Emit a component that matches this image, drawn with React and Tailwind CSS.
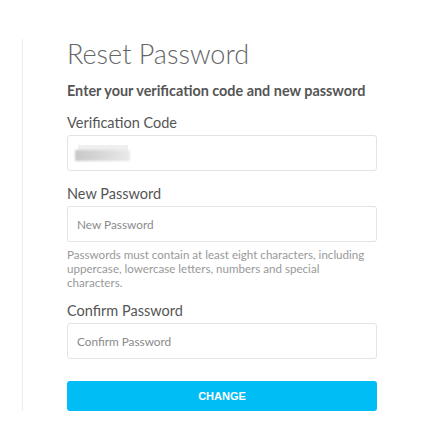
import React from "react";

const Label = ({ children, className = "" }) => (
  <label className={`block text-[14.5px] leading-[18px] text-[#555] ${className}`}>{children}</label>
);

const Field = ({ placeholder }) => (
  <input
    type="password"
    placeholder={placeholder}
    className="mt-[3px] block w-full h-[36px] px-[9px] rounded-[3px] border border-[#e3e3e3] bg-white text-[11.8px] text-[#555] placeholder:text-[#8a8a8a] outline-none"
    style={{ fontFamily: "Lato, 'Open Sans', sans-serif" }}
  />
);

export default function App() {
  return (
    <div className="w-[444px] h-[439px] bg-white" style={{ fontFamily: "Lato, 'Open Sans', sans-serif" }}>
      <div className="pt-[39px] pl-[22px]">
        <div className="w-[356px] border-l border-[#ececec] pl-[44px] pr-[1px]">
          <h1 className="text-[27px] leading-[30px] font-light text-[#666]">Reset Password</h1>
          <p className="mt-[14px] text-[14.4px] leading-[16px] font-bold text-[#555]">
            Enter your verification code and new password
          </p>

          <Label className="mt-[15px]">Verification Code</Label>
          <div className="mt-[3px] h-[36px] w-full rounded-[3px] border border-[#e3e3e3] bg-white flex items-center pl-[7px]">
            {/* blurred code */}
            <div className="relative w-[56px] h-[17px]">
              <div className="absolute left-[3px] top-0 w-[50px] h-[6px] bg-[#efefef]" />
              <div className="absolute left-0 top-[5px] w-[55px] h-[11px] bg-gradient-to-r from-[#c8c8c8] via-[#d8d8d8] to-[#eaeaea] blur-[1px]" />
            </div>
          </div>

          <Label className="mt-[14px]">New Password</Label>
          <Field placeholder="New Password" />

          <p className="mt-[6px] text-[11.6px] leading-[14px] text-[#999]">
            Passwords must contain at least eight characters, including uppercase, lowercase letters, numbers and special characters.
          </p>

          <Label className="mt-[12px]">Confirm Password</Label>
          <Field placeholder="Confirm Password" />

          <button
            className="mt-[22px] block w-full h-[30px] rounded-[3px] bg-[#01bdf6] text-white text-[11px] font-bold"
            style={{ fontFamily: "'Liberation Sans', Arial, sans-serif" }}
          >
            CHANGE
          </button>
        </div>
      </div>
    </div>
  );
}
